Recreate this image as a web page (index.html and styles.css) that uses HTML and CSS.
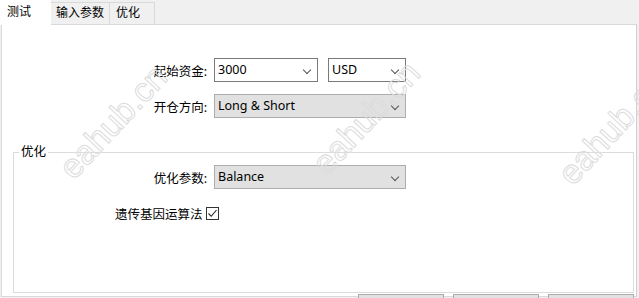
FILE: index.html
```html
<!DOCTYPE html>
<html lang="zh-CN">
<head>
    <meta charset="UTF-8">
    <meta name="viewport" content="width=device-width, initial-scale=1.0">
    <title>测试</title>
    <link rel="stylesheet" href="styles.css">
</head>
<body>
    <!-- Tab strip -->
    <div class="tabs">
        <div class="tab active">测试</div>
        <div class="tab">输入参数</div>
        <div class="tab">优化</div>
    </div>

    <!-- Tab page -->
    <div class="panel">
        <div class="row">
            <label class="label">起始资金:</label>
            <div class="combo deposit">3000<span class="arrow"></span></div>
            <div class="combo currency">USD<span class="arrow"></span></div>
        </div>
        <div class="row">
            <label class="label">开仓方向:</label>
            <div class="combo wide readonly">Long &amp; Short<span class="arrow"></span></div>
        </div>

        <fieldset class="group">
            <legend>优化</legend>
            <div class="row">
                <label class="label">优化参数:</label>
                <div class="combo wide readonly">Balance<span class="arrow"></span></div>
            </div>
            <div class="check-row">
                <span>遗传基因运算法</span>
                <span class="checkbox">
                    <svg width="11" height="11" viewBox="0 0 11 11"><path d="M1.5 5.5 L4.2 8.3 L9.5 2" fill="none" stroke="#222" stroke-width="1.1"/></svg>
                </span>
            </div>
        </fieldset>

        <div class="buttons">
            <button class="btn"></button>
            <button class="btn"></button>
            <button class="btn"></button>
        </div>
    </div>

    <!-- Watermarks -->
    <span class="wm" style="left: 113px; top: 122px;">eahub.cn</span>
    <span class="wm" style="left: 366px; top: 118px;">eahub.cn</span>
    <span class="wm" style="left: 612px; top: 128px;">eahub.cn</span>
</body>
</html>
```

FILE: styles.css
```css
body {
    margin: 0;
    height: 298px;
    overflow: hidden;
    position: relative;
    background-color: #f0f0f0;
    color: #000000;
    font-family: 'Segoe UI', 'Noto Sans', 'Noto Sans CJK SC', sans-serif;
    font-size: 12px;
}

/* Tab strip */
.tabs {
    display: flex;
    height: 24px;
    align-items: flex-end;
}

.tab {
    height: 22px;
    line-height: 20px;
    padding: 0 5px;
    box-sizing: border-box;
    border: 1px solid #d9d9d9;
    border-bottom: none;
    border-left: none;
    background-color: #f0f0f0;
}

.tab.active {
    width: 51px;
    height: 25px;
    line-height: 24px;
    padding-left: 7px;
    background-color: #ffffff;
    border: none;
    position: relative;
    z-index: 1;
    margin-bottom: -1px;
}

.tabs .tab:nth-child(2) {
    width: 59px;
}

.tabs .tab:nth-child(3) {
    width: 45px;
    padding-left: 6px;
}

/* Tab page */
.panel {
    width: 636px;
    height: 273px;
    box-sizing: border-box;
    margin-left: 1px;
    border: 1px solid #d9d9d9;
    border-right-color: #cfcfcf;
    background-color: #ffffff;
    padding-top: 33px;
}

.row {
    display: flex;
    align-items: center;
    height: 24px;
    margin-bottom: 12px;
}

.label {
    width: 205px;
    text-align: right;
    margin-right: 7px;
    font-size: 12.5px;
}

.combo {
    position: relative;
    height: 24px;
    box-sizing: border-box;
    border: 1px solid #7a7a7a;
    background-color: #ffffff;
    padding-left: 3px;
    line-height: 21px;
    font-size: 12.5px;
}

.combo.deposit {
    width: 104px;
    margin-right: 10px;
}

.combo.currency {
    width: 78px;
}

.combo.wide {
    width: 192px;
}

.combo.readonly {
    background-color: #e1e1e1;
    border-color: #adadad;
}

.arrow {
    position: absolute;
    right: 7px;
    top: 8px;
    width: 5px;
    height: 5px;
    border-right: 1px solid #555555;
    border-bottom: 1px solid #555555;
    transform: rotate(45deg);
}

/* Group box */
.group {
    margin: 27px 2px 0 11px;
    padding: 6px 0 0 0;
    height: 148px;
    box-sizing: border-box;
    border: 1px solid #dcdcdc;
}

.group legend {
    margin-left: 5px;
    padding: 0 2px;
    font-size: 12.5px;
    line-height: 14px;
}

.group .label {
    width: 193px;
}

.group .row {
    margin-bottom: 15px;
}

.check-row {
    display: flex;
    align-items: center;
    padding-left: 101px;
    font-size: 12.5px;
}

.checkbox {
    width: 13px;
    height: 13px;
    box-sizing: border-box;
    border: 1px solid #333333;
    margin-left: 3px;
    display: flex;
    align-items: center;
    justify-content: center;
}

/* Bottom buttons */
.buttons {
    display: flex;
    justify-content: flex-end;
    gap: 9px;
    padding-right: 2px;
    margin-top: 1px;
    height: 5px;
    overflow: hidden;
}

.btn {
    width: 86px;
    height: 24px;
    flex-shrink: 0;
    border: 1px solid #adadad;
    background-color: #e1e1e1;
}

/* Watermark */
.wm {
    position: absolute;
    transform: translate(-50%, -50%) rotate(-47deg);
    font-family: 'Liberation Sans', sans-serif;
    font-size: 34px;
    color: transparent;
    -webkit-text-stroke: 1px #dcdcdc;
    pointer-events: none;
    white-space: nowrap;
}
```
